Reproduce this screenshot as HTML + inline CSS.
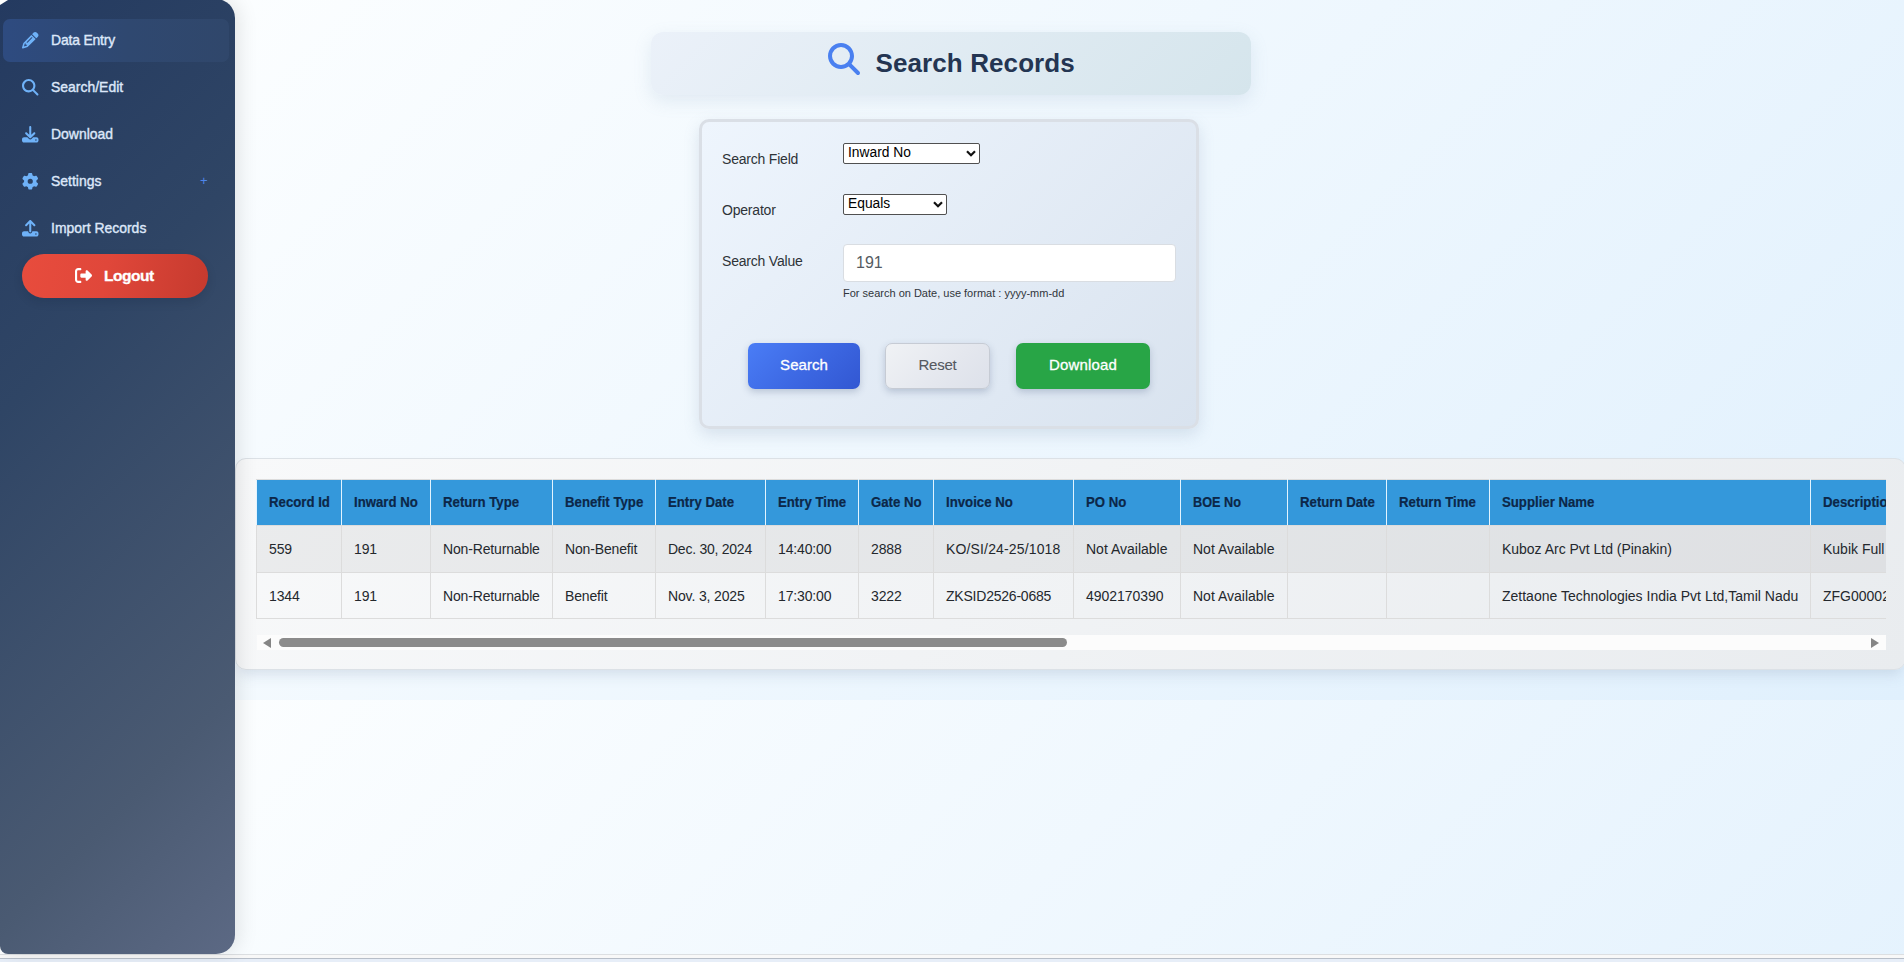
<!DOCTYPE html>
<html lang="en">
<head>
<meta charset="utf-8">
<title>Search Records</title>
<style>
*{box-sizing:border-box;}
html,body{margin:0;padding:0;}
html{background:#f4f9fe;}
body{width:1904px;height:962px;overflow:hidden;position:relative;font-family:"Liberation Sans",sans-serif;color:#2b2f36;}
.bg1{position:absolute;left:0;top:0;width:1904px;height:700px;background:linear-gradient(135deg,#feffff 0%,#e0f0fd 100%);}
.bg2{position:absolute;left:0;top:700px;width:1904px;height:254px;overflow:hidden;}
.bg2 i{display:block;width:1904px;height:700px;background:linear-gradient(135deg,#feffff 0%,#e0f0fd 100%);}
.bottomstrip{position:absolute;left:0;top:954px;width:1904px;height:8px;background:#e7eef8;}
.bottomstrip i{position:absolute;left:0;width:1904px;display:block;}
.bottomstrip .l1{top:0;height:1px;background:#dcdfe2;}
.bottomstrip .l2{top:1px;height:3px;background:#f8f8f8;}
.bottomstrip .l3{top:4px;height:1px;background:#b7bec8;}

/* sidebar */
.sidebar{position:absolute;left:0;top:-1px;width:235px;height:954.6px;border-radius:0 19px 19px 8px;background:linear-gradient(135deg,#243a60 0%,#2f4565 35%,#4a5a72 78%,#5c6984 100%);box-shadow:4px 0 20px rgba(0,0,0,.1);z-index:5;}
.corner{position:absolute;z-index:6;left:0;top:0;width:0;height:0;border-top:5px solid #fff;border-right:8px solid transparent;}
.nav{list-style:none;margin:0;padding:0;}
.nav li{position:absolute;margin-top:1px;left:3px;width:226px;height:43px;border-radius:7px;}
.nav li.active{background:linear-gradient(90deg,#2e4b80 0%,#2f4870 55%,#30476b 100%);}
.nav li svg{position:absolute;left:19px;top:13px;width:16.5px;height:16.5px;fill:#6fb2f8;}
.nav li span{position:absolute;left:48px;top:-1px;line-height:43px;font-size:15px;color:#dde7f9;white-space:nowrap;letter-spacing:0;-webkit-text-stroke:0.4px #dde7f9;transform:scaleX(.93);transform-origin:0 50%;}
.nav li em{position:absolute;right:21.5px;top:0;line-height:42px;font-style:normal;font-size:13px;color:#4f86ea;}
.logout{position:absolute;left:22px;top:255px;width:186px;height:44px;border-radius:22px;background:linear-gradient(100deg,#e84c3d 0%,#e0473a 45%,#c63a2e 100%);box-shadow:0 4px 10px rgba(10,20,40,.13);color:#fff;}
.logout svg{position:absolute;left:53px;top:13px;width:17px;height:17px;fill:#fff;}
.logout span{position:absolute;left:82px;top:-0.5px;line-height:44px;font-size:15.5px;font-weight:bold;letter-spacing:-0.45px;-webkit-text-stroke:0.3px #fff;}

/* title */
.title{position:absolute;left:651px;top:32px;width:600px;height:63px;border-radius:12px;background:linear-gradient(135deg,#ebf1f9 0%,#d5e5ec 100%);box-shadow:0 6px 18px rgba(120,150,180,.16);}
.title svg{position:absolute;left:176.5px;top:11px;width:32px;height:32px;fill:#4a80f0;}
.title h1{position:absolute;left:224.5px;top:1px;margin:0;line-height:61px;font-size:26px;font-weight:bold;color:#243552;white-space:nowrap;letter-spacing:0.1px;}

/* form card */
.card{position:absolute;left:699px;top:119px;width:500px;height:310px;border:3px solid #dadfe6;border-radius:10px;background:linear-gradient(135deg,#eef5fd 0%,#d9e3ef 100%);box-shadow:0 6px 16px rgba(110,135,165,.2);}
.card label{position:absolute;left:20px;margin-top:-1px;font-size:14px;color:#2e3338;white-space:nowrap;letter-spacing:-0.2px;}
.sel{position:absolute;left:141px;margin-top:-1px;height:21px;border:1px solid #505050;border-radius:2px;background:#fff;font-size:13.8px;color:#000;padding:0 0 0 4px;line-height:18px;white-space:nowrap;}
.sel svg{position:absolute;right:3px;top:6px;width:10px;height:7px;fill:none;stroke:#111;stroke-width:2.2;}
.inp{position:absolute;left:141px;top:122px;width:333px;height:38px;border:1px solid #d9dde2;border-radius:4px;background:#fff;font-size:16px;color:#555b62;line-height:35px;padding-left:12px;}
.help{position:absolute;left:141px;top:165px;font-size:11px;color:#30353b;white-space:nowrap;letter-spacing:0;}
.btn{position:absolute;top:221px;height:46px;border-radius:7px;text-align:center;line-height:43px;font-size:15px;letter-spacing:0.35px;color:#fff;-webkit-text-stroke:0.3px currentColor;box-shadow:0 3px 7px rgba(60,80,120,.25);}
.b1{letter-spacing:0.05px;left:46px;width:112px;background:linear-gradient(135deg,#4a7df6 0%,#3c67e2 55%,#3257d2 100%);}
.b2{letter-spacing:-0.2px;left:183px;width:105px;background:linear-gradient(135deg,#f0f2f5 0%,#e4e7ee 60%,#dde1ea 100%);border:1px solid #c6cbd4;color:#55595f;line-height:41px;-webkit-text-stroke:0.1px currentColor;}
.b3{letter-spacing:0.15px;left:314px;width:134px;background:#28a546;}

/* results */
.results{position:absolute;left:235px;top:458px;width:1671px;height:212px;border:1px solid #dce1e6;border-radius:11px;background:linear-gradient(135deg,#f8f9fa 0%,#e9ecef 100%);box-shadow:0 8px 14px -4px rgba(140,160,185,.3);}
.scroll{position:absolute;left:20px;top:20px;width:1630px;height:140px;overflow:hidden;}
table{border-collapse:collapse;table-layout:fixed;width:1900px;font-size:14px;}
th,td{border:1px solid #dcdcdc;padding:0 0 0 12px;text-align:left;white-space:nowrap;overflow:hidden;}
th{height:46px;padding-bottom:2px;background:#3498db;color:#0c2748;-webkit-text-stroke:0.2px #0c2748;font-weight:bold;border-color:#dcdcdc #e2f4ff;letter-spacing:0;}
th span{display:inline-block;transform:scaleX(.943);transform-origin:0 50%;}
td{height:46px;color:#24282d;letter-spacing:-0.15px;}
tr.r1 td{background:rgba(0,0,0,.05);height:47px;}
tr.r2 td{background:transparent;}
.sbar{position:absolute;left:21px;top:176px;width:1629px;height:15px;background:#fcfcfc;}
.sbar .thumb{position:absolute;left:22px;top:3px;width:788px;height:9px;border-radius:5px;background:#8b8b8b;}
.sbar .la{position:absolute;left:6px;top:3px;width:0;height:0;border-top:5px solid transparent;border-bottom:5px solid transparent;border-right:8px solid #858585;}
.sbar .ra{position:absolute;right:7px;top:3px;width:0;height:0;border-top:5px solid transparent;border-bottom:5px solid transparent;border-left:8px solid #858585;}
</style>
</head>
<body>
<div class="bg1"></div>
<div class="bg2"><i></i></div>

<aside class="sidebar">
  <ul class="nav">
    <li class="active" style="top:19px"><svg viewBox="0 0 512 512"><path d="M410.300 231l11.300-11.300-33.900-33.900-62.100-62.100L291.700 89.800l-11.300 11.300-22.600 22.600L58.600 322.900c-10.400 10.400-18 23.300-22.200 37.400L1 480.700c-2.500 8.400-.2 17.500 6.100 23.700s15.300 8.500 23.700 6.100l120.300-35.400c14.100-4.200 27-11.800 37.400-22.200L387.700 253.700 410.300 231zM160 399.400l-9.100 22.700c-4 3.100-8.500 5.400-13.300 6.900L59.400 452l23-78.100c1.400-4.900 3.800-9.400 6.900-13.300l22.700-9.100v32c0 8.800 7.200 16 16 16h32zM362.700 18.700L348.300 33.200 325.700 55.800 314.300 67.100l33.900 33.900 62.100 62.100 33.900 33.900 11.300-11.300 22.600-22.600 14.500-14.500c25-25 25-65.500 0-90.500L453.300 18.700c-25-25-65.500-25-90.500 0zm-47.400 168l-144 144c-6.200 6.200-16.400 6.200-22.600 0s-6.200-16.400 0-22.600l144-144c6.200-6.200 16.400-6.200 22.600 0s6.200 16.400 0 22.600z"/></svg><span style="letter-spacing:-0.2px">Data Entry</span></li>
    <li style="top:66px"><svg viewBox="0 0 512 512"><path d="M416 208c0 45.900-14.900 88.300-40 122.700L502.600 457.400c12.500 12.500 12.500 32.800 0 45.300s-32.800 12.500-45.300 0L330.700 376c-34.400 25.200-76.800 40-122.700 40C93.100 416 0 322.900 0 208S93.100 0 208 0S416 93.100 416 208zM208 352a144 144 0 1 0 0-288 144 144 0 1 0 0 288z"/></svg><span>Search/Edit</span></li>
    <li style="top:113px"><svg viewBox="0 0 512 512"><path d="M288 32c0-17.700-14.300-32-32-32s-32 14.300-32 32V274.700l-73.400-73.400c-12.500-12.500-32.800-12.500-45.300 0s-12.500 32.800 0 45.300l128 128c12.500 12.500 32.800 12.500 45.300 0l128-128c12.500-12.500 12.500-32.800 0-45.300s-32.800-12.500-45.300 0L288 274.700V32zM64 352c-35.300 0-64 28.700-64 64v32c0 35.300 28.700 64 64 64H448c35.300 0 64-28.700 64-64V416c0-35.300-28.700-64-64-64H346.500l-45.300 45.300c-25 25-65.500 25-90.500 0L165.500 352H64zm368 56a24 24 0 1 1 0 48 24 24 0 1 1 0-48z"/></svg><span>Download</span></li>
    <li style="top:160px"><svg viewBox="0 0 512 512"><path d="M495.900 166.600c3.200 8.700 .5 18.400-6.400 24.600l-43.300 39.400c1.100 8.300 1.700 16.800 1.700 25.400s-.6 17.100-1.700 25.400l43.300 39.400c6.900 6.200 9.600 15.900 6.400 24.600c-4.400 11.900-9.700 23.300-15.800 34.300l-4.700 8.100c-6.600 11-14 21.400-22.100 31.200c-5.900 7.200-15.700 9.600-24.500 6.800l-55.700-17.700c-13.400 10.300-28.200 18.900-44 25.400l-12.500 57.100c-2 9.100-9 16.300-18.200 17.800c-13.800 2.300-28 3.500-42.500 3.500s-28.700-1.200-42.500-3.500c-9.200-1.500-16.200-8.700-18.200-17.800l-12.500-57.100c-15.800-6.500-30.600-15.100-44-25.400L83.100 425.900c-8.800 2.800-18.600 .3-24.500-6.800c-8.100-9.800-15.500-20.200-22.100-31.200l-4.700-8.100c-6.100-11-11.400-22.400-15.800-34.300c-3.200-8.700-.5-18.400 6.400-24.600l43.300-39.400C64.600 273.100 64 264.600 64 256s.6-17.100 1.700-25.400L22.400 191.200c-6.900-6.200-9.600-15.900-6.400-24.600c4.400-11.900 9.700-23.300 15.800-34.300l4.700-8.100c6.600-11 14-21.400 22.100-31.200c5.900-7.200 15.700-9.600 24.500-6.800l55.700 17.700c13.400-10.300 28.200-18.900 44-25.400l12.500-57.100c2-9.100 9-16.300 18.200-17.800C227.300 1.200 241.500 0 256 0s28.700 1.200 42.500 3.500c9.200 1.500 16.200 8.700 18.200 17.800l12.500 57.100c15.800 6.500 30.600 15.100 44 25.400l55.700-17.700c8.800-2.800 18.600-.3 24.500 6.800c8.100 9.800 15.500 20.200 22.100 31.200l4.700 8.100c6.100 11 11.400 22.400 15.800 34.300zM256 336a80 80 0 1 0 0-160 80 80 0 1 0 0 160z"/></svg><span>Settings</span><em>+</em></li>
    <li style="top:207px"><svg viewBox="0 0 512 512"><path d="M288 109.300V352c0 17.700-14.300 32-32 32s-32-14.300-32-32V109.300l-73.400 73.400c-12.500 12.500-32.800 12.500-45.300 0s-12.500-32.800 0-45.300l128-128c12.500-12.500 32.800-12.500 45.300 0l128 128c12.500 12.500 12.500 32.800 0 45.300s-32.800 12.500-45.300 0L288 109.300zM64 352H192c0 35.300 28.700 64 64 64s64-28.700 64-64H448c35.300 0 64 28.700 64 64v32c0 35.300-28.700 64-64 64H64c-35.300 0-64-28.700-64-64V416c0-35.300 28.700-64 64-64zM432 456a24 24 0 1 0 0-48 24 24 0 1 0 0 48z"/></svg><span>Import Records</span></li>
  </ul>
  <div class="logout"><svg viewBox="0 0 512 512"><path d="M377.900 105.900L500.700 228.700c7.200 7.200 11.300 17.100 11.300 27.300s-4.100 20.100-11.300 27.300L377.900 406.100c-6.400 6.400-15 9.900-24 9.900c-18.700 0-33.900-15.200-33.900-33.900l0-62.100-128 0c-17.700 0-32-14.300-32-32l0-64c0-17.700 14.300-32 32-32l128 0 0-62.100c0-18.700 15.200-33.900 33.900-33.900c9 0 17.600 3.600 24 9.900zM160 96L96 96c-17.700 0-32 14.300-32 32l0 256c0 17.700 14.300 32 32 32l64 0c17.700 0 32 14.300 32 32s-14.300 32-32 32l-64 0c-53 0-96-43-96-96L0 128C0 75 43 32 96 32l64 0c17.700 0 32 14.300 32 32s-14.300 32-32 32z"/></svg><span>Logout</span></div>
</aside>
<div class="corner"></div>

<div class="title">
  <svg viewBox="0 0 512 512"><path d="M416 208c0 45.900-14.900 88.300-40 122.700L502.600 457.400c12.500 12.500 12.500 32.800 0 45.300s-32.800 12.500-45.300 0L330.700 376c-34.400 25.200-76.800 40-122.700 40C93.100 416 0 322.900 0 208S93.100 0 208 0S416 93.100 416 208zM208 352a144 144 0 1 0 0-288 144 144 0 1 0 0 288z"/></svg>
  <h1>Search Records</h1>
</div>

<div class="card">
  <label style="top:30px">Search Field</label>
  <div class="sel" style="top:22px;width:137px">Inward No<svg viewBox="0 0 10 7"><path d="M1 1.2 5 5.2 9 1.2"/></svg></div>
  <label style="top:81px">Operator</label>
  <div class="sel" style="top:73px;width:104px">Equals<svg viewBox="0 0 10 7"><path d="M1 1.2 5 5.2 9 1.2"/></svg></div>
  <label style="top:132px">Search Value</label>
  <div class="inp">191</div>
  <div class="help">For search on Date, use format : yyyy-mm-dd</div>
  <div class="btn b1">Search</div>
  <div class="btn b2">Reset</div>
  <div class="btn b3">Download</div>
</div>

<div class="results">
  <div class="scroll">
    <table>
      <colgroup>
        <col style="width:85px"><col style="width:89px"><col style="width:122px"><col style="width:103px"><col style="width:110px"><col style="width:93px"><col style="width:75px"><col style="width:140px"><col style="width:107px"><col style="width:107px"><col style="width:99px"><col style="width:103px"><col style="width:321px"><col style="width:347px">
      </colgroup>
      <thead>
        <tr><th><span>Record Id</span></th><th><span>Inward No</span></th><th><span>Return Type</span></th><th><span>Benefit Type</span></th><th><span>Entry Date</span></th><th><span>Entry Time</span></th><th><span>Gate No</span></th><th><span>Invoice No</span></th><th><span>PO No</span></th><th><span style="transform:scaleX(.905)">BOE No</span></th><th><span>Return Date</span></th><th><span>Return Time</span></th><th><span>Supplier Name</span></th><th><span>Description</span></th></tr>
      </thead>
      <tbody>
        <tr class="r1"><td><span>559</span></td><td><span>191</span></td><td><span>Non-Returnable</span></td><td><span>Non-Benefit</span></td><td><span style="letter-spacing:-0.25px">Dec. 30, 2024</span></td><td><span>14:40:00</span></td><td><span>2888</span></td><td><span style="letter-spacing:0.15px">KO/SI/24-25/1018</span></td><td><span style="letter-spacing:0px">Not Available</span></td><td><span style="letter-spacing:0px">Not Available</span></td><td></td><td></td><td><span style="letter-spacing:-0.02px">Kuboz Arc Pvt Ltd (Pinakin)</span></td><td><span style="letter-spacing:0px">Kubik Full Height Partition System</span></td></tr>
        <tr class="r2"><td><span>1344</span></td><td><span>191</span></td><td><span>Non-Returnable</span></td><td><span>Benefit</span></td><td><span>Nov. 3, 2025</span></td><td><span>17:30:00</span></td><td><span>3222</span></td><td><span style="letter-spacing:-0.22px">ZKSID2526-0685</span></td><td><span style="letter-spacing:-0.05px">4902170390</span></td><td><span style="letter-spacing:0px">Not Available</span></td><td></td><td></td><td><span style="letter-spacing:0px">Zettaone Technologies India Pvt Ltd,Tamil Nadu</span></td><td><span style="letter-spacing:0px">ZFG000021 Controller Assembly Unit</span></td></tr>
      </tbody>
    </table>
  </div>
  <div class="sbar"><div class="la"></div><div class="thumb"></div><div class="ra"></div></div>
</div>

<div class="bottomstrip"><i class="l1"></i><i class="l2"></i><i class="l3"></i></div>
</body>
</html>
